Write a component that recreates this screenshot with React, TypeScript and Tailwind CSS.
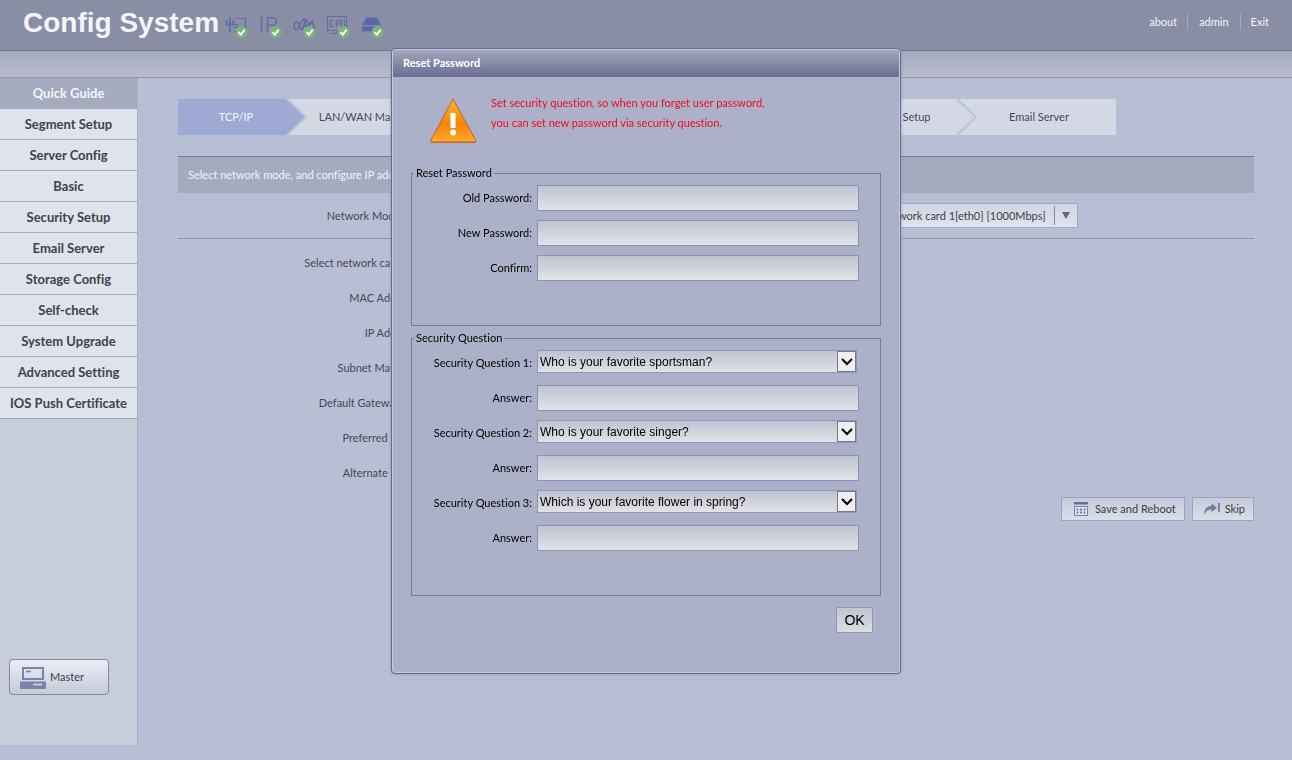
import React, { useState } from "react";

interface StepItem {
  text: string;
  width: string;
}

interface QuestionItem {
  id: number;
  selected: string;
}

const menu = [
  "Quick Guide",
  "Segment Setup",
  "Server Config",
  "Basic",
  "Security Setup",
  "Email Server",
  "Storage Config",
  "Self-check",
  "System Upgrade",
  "Advanced Setting",
  "IOS Push Certificate",
];

const steps: StepItem[] = [
  { text: "TCP/IP", width: "w-[130px]" },
  { text: "LAN/WAN Mapping", width: "w-[134px]" },
  { text: "Server Config", width: "w-[134px]" },
  { text: "Time Setup", width: "w-[134px]" },
  { text: "Route Setup", width: "w-[134px]" },
  { text: "User Setup", width: "w-[134px]" },
  { text: "Email Server", width: "w-[138px]" },
];

const networkRows = [
  "Select network card:",
  "MAC Addr:",
  "IP Addr:",
  "Subnet Mask:",
  "Default Gateway:",
  "Preferred IP:",
  "Alternate IP:",
];

const passwordRows = ["Old Password:", "New Password:", "Confirm:"];

const favorites = [
  "Who is your favorite sportsman?",
  "Who is your favorite singer?",
  "Which is your favorite flower in spring?",
];

const questions: QuestionItem[] = favorites.map((selected, i) => ({
  id: i + 1,
  selected,
}));

function StatusIcon({ children }: { children: React.ReactNode }) {
  return (
    <svg width="24" height="24" viewBox="0 0 24 24" fill="none" stroke="#636da4" strokeWidth="1.200">
      {children}
      <circle cx="16.500" cy="17" r="6" fill="#79b57c" stroke="none" />
      <path d="M13.500 17l2.300 2.700 3.900-5" stroke="#f4fff4" strokeWidth="1.900" />
    </svg>
  );
}

function StatusIcons() {
  return (
    <div className="flex gap-[10px] pt-2">
      <StatusIcon>
        <path d="M5 2v15M1.500 5v4.500h7V5" strokeWidth="2" />
        <path d="M10 3.500h10.500V14M7 9.500h5M12.500 9v4M9 12.500h4M9 16.500h4" />
      </StatusIcon>
      <StatusIcon>
        <path d="M2.500 2v15M8.500 17V2.700h5a3.800 3.800 0 0 1 0 7.600h-5" strokeWidth="1.600" />
      </StatusIcon>
      <StatusIcon>
        <path d="M1 11c1-4 3-5 4-3l3 6c1 1 2 0 2-1l3-9 3 6 3-4 3 8M1 11c0 4 3 5 4 2l3-6 3-3 2 8 3-2 3-3" strokeWidth="1.600" strokeLinejoin="round" />
      </StatusIcon>
      <StatusIcon>
        <path d="M.500 1.500h19v14H.500zM4 18.500h9M10 16v2M7 5.500H3.500v6H7M9.500 12V5.500h3v3.500h-3M14.500 5v6.500h3V5" />
      </StatusIcon>
      <StatusIcon>
        <path d="M5.500 3h10l4 7H1.500zM1.500 11.500h18v4.500h-18z" fill="#5967a3" strokeLinejoin="round" />
        <path d="M1.500 10.800h18" stroke="#8a92b8" strokeWidth="1" />
      </StatusIcon>
    </div>
  );
}

function WarningIcon() {
  return (
    <svg width="48" height="48" viewBox="0 0 48 48" className="mt-1 shrink-0">
      <defs>
        <linearGradient id="warn" x1="0" y1="0" x2="0" y2="1">
          <stop offset="0" stopColor="#ffb52e" />
          <stop offset="0.600" stopColor="#f98408" />
          <stop offset="1" stopColor="#ffac2c" />
        </linearGradient>
      </defs>
      <path d="M24 2L46.500 43q1 2-1 2H3q-2 0-1-2z" fill="url(#warn)" stroke="#b5672a" strokeWidth="1" />
      <path d="M2 45.500h44" stroke="#b36a35" strokeWidth="1" />
      <rect x="21.500" y="16" width="5" height="15" fill="#fff" />
      <circle cx="24" cy="35.500" r="3" fill="#fff" />
    </svg>
  );
}

function Header() {
  return (
    <header>
      <div className="flex h-[50px] items-start justify-between bg-[#898ea4] pr-[23px] pl-[23px]">
        <div className="flex items-start gap-[6px] pt-[7px]">
          <h1 className="font-['Liberation_Sans',sans-serif] text-[28px] leading-8 font-bold text-[#f4f5fc]">
            Config System
          </h1>
          <StatusIcons />
        </div>
        <nav className="flex items-center pt-[14px] text-[#f4f5fc]">
          <a href="#about" className="border-r border-[#a5a9bc] pr-[10px]">about</a>
          <a href="#admin" className="border-r border-[#a5a9bc] px-[11px]">admin</a>
          <a href="#exit" className="pl-[10px]">Exit</a>
        </nav>
      </div>
      <div className="h-7 border-t border-b border-t-[#6e7389] border-b-[#9297a9] bg-linear-to-b from-[#a5abbf] to-[#b8bbcb]" />
    </header>
  );
}

function Sidebar() {
  return (
    <aside className="mb-[15px] flex w-[138px] shrink-0 flex-col border-r border-[#abb1c4] bg-[#c8cddc]">
      <nav>
        {menu.map((item, i) => (
          <a
            key={item}
            href="#menu"
            className={
              i === 0
                ? "block h-[31px] bg-[#a4abbe] text-center text-[13px] leading-[30px] font-bold text-[#f5f7fc]"
                : "block h-[31px] border-b border-[#a3a9b8] bg-[#dfe3eb] text-center text-[13px] leading-[30px] font-bold text-[#40424e]"
            }
          >
            {item}
          </a>
        ))}
      </nav>
      <button className="mt-auto mb-[50px] ml-[9px] flex h-9 w-[100px] items-center gap-1 rounded border border-[#8488a0] bg-linear-to-b from-[#eceef6] to-[#c5cad9] pl-[10px] text-[#3c3e4b]">
        <svg width="26" height="23" viewBox="0 0 26 23">
          <path d="M3 2h20v11H3z" fill="none" stroke="#7a83a8" strokeWidth="2" />
          <path d="M6 5.500h5" stroke="#7a83a8" strokeWidth="1.600" />
          <path d="M0 15.500h26V23H0z" fill="#7a83a8" />
          <path d="M13 18.500h9" stroke="#d8dcea" strokeWidth="1.600" />
        </svg>
        Master
      </button>
    </aside>
  );
}

function Steps() {
  return (
    <ol className="flex h-9">
      {steps.map((step, i) => (
        <li
          key={step.text}
          className={`${step.width} flex shrink-0 items-center ${
            i === 0 ? "bg-[#9eaad3] text-[#f2f5ff]" : "bg-[#d4d8e5]"
          }`}
        >
          <span className={i < steps.length - 1 ? "flex-1 pl-2 text-center whitespace-nowrap" : "flex-1 pr-4 text-center"}>
            {step.text}
          </span>
          {i < steps.length - 1 && (
            <svg width="22" height="36" viewBox="0 0 22 36">
              <path d="M1 0h21v36H1l19-18z" fill="#d4d8e5" />
              <path d="M1 0l19 18L1 36" fill="none" stroke="#bdc3d7" strokeWidth="2" />
            </svg>
          )}
        </li>
      ))}
    </ol>
  );
}

function NetworkForm() {
  return (
    <main className="min-w-0 flex-1 pt-[21px] pr-[38px] pl-10 text-[#454857]">
      <Steps />
      <p className="mt-[21px] h-[37px] border-t border-[#747b9c] bg-[#a4abbf] pl-[10px] leading-9 text-[#f2f4fb]">
        Select network mode, and configure IP address
      </p>
      <div className="mt-[10px] flex h-9 items-start border-b border-[#8f95a9]">
        <label htmlFor="mode" className="w-[225px] text-right leading-[26px]">Network Mode:</label>
        <select id="mode" className="ml-2 h-[26px] w-[180px] appearance-none border border-[#a9b0c7] bg-[#d8dce7] px-2">
          <option>Multi-address</option>
        </select>
        <label htmlFor="card" className="w-[270px] pr-2 text-right leading-[26px]">Default card:</label>
        <div className="grid h-[25px] w-[217px] grid-cols-[1fr_23px] border border-[#a2a9c2] bg-linear-to-b from-[#d2d6e3] to-[#e0e3ec]">
          <select id="card" className="col-span-2 col-start-1 row-start-1 appearance-none pl-[18px] text-[#3a3d4a]">
            <option>Network card 1[eth0] [1000Mbps]</option>
          </select>
          <span className="pointer-events-none col-start-2 row-start-1 my-[2px] flex items-center justify-center border-l border-[#82879b]">
            <svg width="8" height="7" viewBox="0 0 8 7">
              <path d="M0 0h8L4 7z" fill="#646a86" />
            </svg>
          </span>
        </div>
      </div>
      <div className="pt-[7px]">
        {networkRows.map((row) => (
          <div key={row} className="h-[35px] w-[225px] text-right leading-[34px]">
            {row}
          </div>
        ))}
      </div>
      <div className="mt-[6px] flex justify-end gap-[7px]">
        <button className="flex h-6 items-center gap-[6px] border border-[#9ba3c4] bg-linear-to-b from-[#c6cada] to-[#dcdfe8] pr-2 pl-[11px] text-[#3a3c49]">
          <svg width="16" height="16" viewBox="0 0 16 16">
            <path d="M1 1h14v2.500H1z" fill="#68718f" />
            <path d="M1.500 5.500h13v9h-13z" fill="#e2e5ef" stroke="#7580a5" />
            <path d="M3.500 8.500h9M3.500 11.500h9" stroke="#7580a5" strokeWidth="2" strokeDasharray="2 1.500" />
          </svg>
          Save and Reboot
        </button>
        <button className="flex h-6 items-center gap-1 border border-[#9ba3c4] bg-linear-to-b from-[#c6cada] to-[#dcdfe8] pr-2 pl-[10px] text-[#3a3c49]">
          <svg width="18" height="14" viewBox="0 0 18 14">
            <path d="M1 13C1 7 4 4 8.500 4V1L14 6l-5.500 4V7.500C5 7.500 3 9 1 13z" fill="#727c9f" />
            <path d="M16 1v9" stroke="#727c9f" strokeWidth="1.800" />
          </svg>
          Skip
        </button>
      </div>
    </main>
  );
}

const labelClass = "w-[125px] pr-[5px] text-right leading-[26px]";
const inputClass =
  "h-[26px] w-[322px] border border-[#8c93b2] bg-linear-to-b from-[#c0c3d2] to-[#e2e3e6] px-1 outline-none";

function ResetDialog({ onClose }: { onClose: () => void }) {
  return (
    <div className="fixed inset-0 flex items-start justify-center pt-12">
      <div
        role="dialog"
        aria-labelledby="reset-title"
        className="w-[510px] rounded border border-[#666c88] bg-[#acb1c9] text-black shadow-[inset_0_0_0_1px_#c5c9dc,0_0_3px_#8c92ac]"
      >
        <h2
          id="reset-title"
          className="m-px h-[27px] rounded-t-xs bg-linear-to-b from-[#a4a6bd] to-[#696e91] pl-[10px] leading-[26px] font-bold text-white"
        >
          Reset Password
        </h2>
        <div className="px-[19px] pb-[40px]">
          <div className="flex h-[87px] items-start gap-[14px] pt-[15px] pl-[18px]">
            <WarningIcon />
            <p className="leading-5 text-[#f00a20]">
              Set security question, so when you forget user password,
              <br />
              you can set new password via security question.
            </p>
          </div>
          <fieldset className="h-[161px] border border-[#757b98] pt-1">
            <legend className="ml-[2px] px-[2px] leading-4">Reset Password</legend>
            {passwordRows.map((row) => (
              <div key={row} className="flex h-[35px] items-start">
                <label htmlFor={row} className={labelClass}>{row}</label>
                <input id={row} type="password" className={inputClass} />
              </div>
            ))}
          </fieldset>
          <fieldset className="mt-1 h-[266px] border border-[#757b98] pt-1">
            <legend className="ml-[2px] px-[2px] leading-4">Security Question</legend>
            {questions.map((question) => (
              <div key={question.id}>
                <div className="flex h-[35px] items-start">
                  <label htmlFor={`question${question.id}`} className={labelClass}>
                    Security Question {question.id}:
                  </label>
                  <div className="grid h-[23px] w-[320px] grid-cols-[1fr_19px] border border-[#9097b4] bg-linear-to-b from-[#bfc2d1] to-[#e2e3e6]">
                    <select
                      id={`question${question.id}`}
                      defaultValue={question.selected}
                      className="col-span-2 col-start-1 row-start-1 appearance-none pl-[2px] font-['Liberation_Sans',sans-serif] text-[12px] outline-none"
                    >
                      {favorites.map((text) => (
                        <option key={text}>{text}</option>
                      ))}
                    </select>
                    <span className="pointer-events-none col-start-2 row-start-1 flex items-center justify-center border border-[#777b88] bg-[#efeff1]">
                      <svg width="12" height="8" viewBox="0 0 12 8">
                        <path d="M1 1l5 5 5-5" fill="none" stroke="#000" strokeWidth="2" />
                      </svg>
                    </span>
                  </div>
                </div>
                <div className="flex h-[35px] items-start">
                  <label htmlFor={`answer${question.id}`} className={labelClass}>Answer:</label>
                  <input id={`answer${question.id}`} className={inputClass} />
                </div>
              </div>
            ))}
          </fieldset>
          <div className="flex justify-end pt-[11px] pr-2">
            <button
              onClick={onClose}
              className="h-[26px] w-[37px] border border-[#9097b4] bg-linear-to-b from-[#c2c5d2] to-[#dcdde3] font-['Liberation_Sans',sans-serif] text-[14px]"
            >
              OK
            </button>
          </div>
        </div>
      </div>
    </div>
  );
}

export default function App() {
  const [open, setOpen] = useState(true);

  return (
    <div className="flex min-h-screen flex-col bg-[#b8bed4] font-[Lato,sans-serif] text-[11px] leading-4 [font-variant-ligatures:none]">
      <Header />
      <div className="flex flex-1">
        <Sidebar />
        <NetworkForm />
      </div>
      {open && <ResetDialog onClose={() => setOpen(false)} />}
    </div>
  );
}
